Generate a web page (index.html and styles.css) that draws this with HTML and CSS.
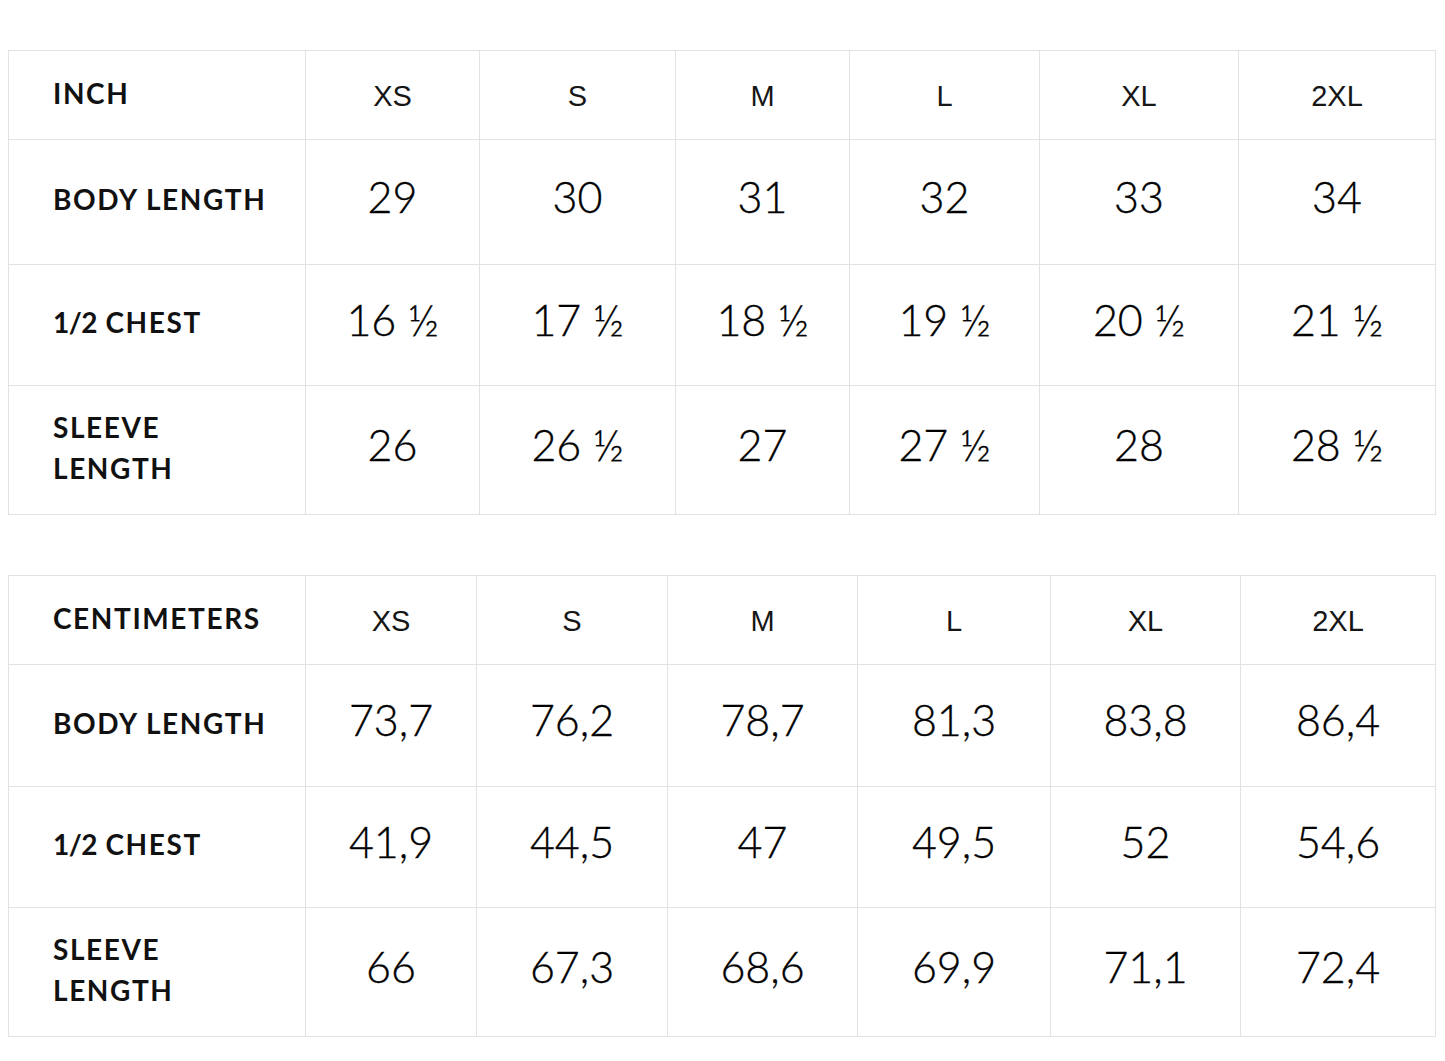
FILE: index.html
```html
<!DOCTYPE html>
<html lang="en">
<head>
<meta charset="utf-8">
<title>Size chart</title>
<link rel="stylesheet" href="styles.css">
</head>
<body>
<main class="page">
  <table class="chart chart-inch">
    <colgroup>
      <col class="c0"><col class="c1"><col class="c2"><col class="c3"><col class="c4"><col class="c5"><col class="c6">
    </colgroup>
    <tr class="head">
      <th class="label">INCH</th><th>XS</th><th>S</th><th>M</th><th>L</th><th>XL</th><th>2XL</th>
    </tr>
    <tr class="r1">
      <th class="label">BODY LENGTH</th><td>29</td><td>30</td><td>31</td><td>32</td><td>33</td><td>34</td>
    </tr>
    <tr class="r2">
      <th class="label"><span class="frac">1/2</span> CHEST</th><td>16 ½</td><td>17 ½</td><td>18 ½</td><td>19 ½</td><td>20 ½</td><td>21 ½</td>
    </tr>
    <tr class="r3">
      <th class="label">SLEEVE<br>LENGTH</th><td>26</td><td>26 ½</td><td>27</td><td>27 ½</td><td>28</td><td>28 ½</td>
    </tr>
  </table>

  <table class="chart chart-cm">
    <colgroup>
      <col class="c0"><col class="c1"><col class="c2"><col class="c3"><col class="c4"><col class="c5"><col class="c6">
    </colgroup>
    <tr class="head">
      <th class="label">CENTIMETERS</th><th>XS</th><th>S</th><th>M</th><th>L</th><th>XL</th><th>2XL</th>
    </tr>
    <tr class="r1">
      <th class="label">BODY LENGTH</th><td>73,7</td><td>76,2</td><td>78,7</td><td>81,3</td><td>83,8</td><td>86,4</td>
    </tr>
    <tr class="r2">
      <th class="label"><span class="frac">1/2</span> CHEST</th><td>41,9</td><td>44,5</td><td>47</td><td>49,5</td><td>52</td><td>54,6</td>
    </tr>
    <tr class="r3">
      <th class="label">SLEEVE<br>LENGTH</th><td>66</td><td>67,3</td><td>68,6</td><td>69,9</td><td>71,1</td><td>72,4</td>
    </tr>
  </table>
</main>
</body>
</html>
```

FILE: styles.css
```css
html, body {
  margin: 0;
  padding: 0;
  background: #ffffff;
}

.page {
  padding: 50px 0 0 8px;
  display: flex;
  flex-direction: column;
  gap: 60px;
}

.chart {
  border-collapse: collapse;
  table-layout: fixed;
  width: 1428px;
  color: #111111;
}

.chart th,
.chart td {
  border: 1px solid #e2e2e2;
  padding: 0;
  text-align: center;
  vertical-align: middle;
}

.chart td {
  font-family: "Lato", "Noto Sans", sans-serif;
  font-weight: 300;
  font-size: 43px;
  line-height: 50px;
  color: #000000;
  padding-bottom: 11px;
  -webkit-text-stroke: 0.35px #000000;
}

.chart .head th {
  font-family: "Liberation Sans", Arial, sans-serif;
  font-weight: 400;
  font-size: 29px;
  color: #161616;
  padding-top: 3px;
}

.chart th.label {
  text-align: left;
  padding-left: 44px;
  padding-bottom: 5px;
  font-family: "Lato", "Noto Sans", sans-serif;
  font-weight: 700;
  font-size: 28px;
  line-height: 41px;
  letter-spacing: 1.6px;
  color: #111111;
}

.chart th.label .frac {
  letter-spacing: -0.5px;
}

.chart .head th.label {
  padding-top: 0;
  padding-bottom: 4px;
}

.chart-inch .c0 { width: 297px; }
.chart-inch .c1 { width: 174px; }
.chart-inch .c2 { width: 196px; }
.chart-inch .c3 { width: 174px; }
.chart-inch .c4 { width: 190px; }
.chart-inch .c5 { width: 199px; }
.chart-inch .c6 { width: 197px; }

.chart-cm .c0 { width: 297px; }
.chart-cm .c1 { width: 171px; }
.chart-cm .c2 { width: 191px; }
.chart-cm .c3 { width: 190px; }
.chart-cm .c4 { width: 193px; }
.chart-cm .c5 { width: 190px; }
.chart-cm .c6 { width: 195px; }

.chart-inch .head { height: 89px; }
.chart-inch .r1 { height: 125px; }
.chart-inch .r2 { height: 121px; }
.chart-inch .r3 { height: 129px; }

.chart-cm .head { height: 89px; }
.chart-cm .r1 { height: 122px; }
.chart-cm .r2 { height: 121px; }
.chart-cm .r3 { height: 129px; }
```
